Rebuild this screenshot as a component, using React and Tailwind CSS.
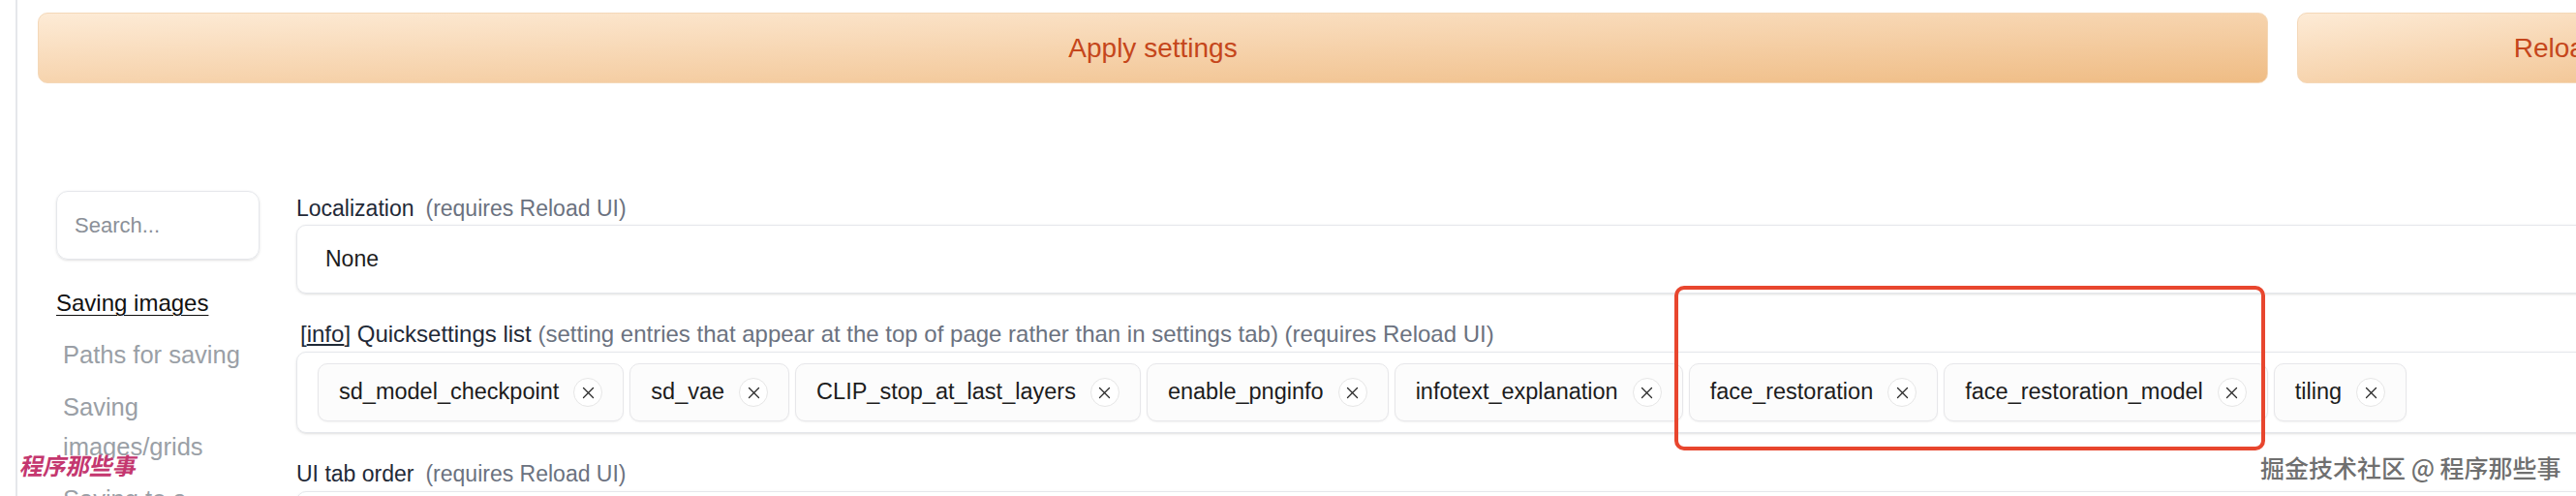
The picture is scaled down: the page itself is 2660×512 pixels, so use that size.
const tags = [
  "sd_model_checkpoint",
  "sd_vae",
  "CLIP_stop_at_last_layers",
  "enable_pnginfo",
  "infotext_explanation",
  "face_restoration",
  "face_restoration_model",
  "tiling",
];

const navItems = ["Paths for saving", "Saving images/grids", "Saving to a directory"];

function CloseIcon() {
  return (
    <svg width="15" height="15" viewBox="0 0 15 15" fill="none">
      <path d="M2.5 2.5L12.5 12.5M12.5 2.5L2.5 12.5" stroke="#2a2a2a" strokeWidth="1.3" strokeLinecap="round" />
    </svg>
  );
}

function Tag({ label }) {
  return (
    <div className="flex h-[60px] shrink-0 items-center rounded-[10px] border border-[#e7e7ea] bg-[#fcfcfc] pl-[21px] pr-[21px] shadow-[0_1px_2px_rgba(0,0,0,0.05)]">
      <span className="text-[23.5px] text-[#1c1c1c]">{label}</span>
      <span className="ml-[15px] flex size-[30px] items-center justify-center rounded-full border border-[#e6e6e6] bg-white">
        <CloseIcon />
      </span>
    </div>
  );
}

function FieldLabel({ children, size = "text-[23px]" }) {
  return <div className={`${size} leading-[28px] text-[#1f2937]`}>{children}</div>;
}

export default function App() {
  return (
    <div className="relative h-[512px] w-[2660px] overflow-hidden bg-white font-['Liberation_Sans','Noto_Sans_CJK_SC',sans-serif]">
      <div className="ml-[16px] h-full border-l-2 border-[#e5e7eb] pl-[21px] pt-[13px]">
        <div className="flex gap-[30px]">
          <button className="flex h-[73px] w-[2303px] shrink-0 items-center justify-center rounded-[10px] border border-[#f4d8b8] bg-linear-to-br from-[#fdebd6] to-[#efbc84] text-[28px] text-[#c5461b]">
            Apply settings
          </button>
          <button className="flex h-[73px] w-[572px] shrink-0 items-center justify-center rounded-[10px] border border-[#f4d8b8] bg-linear-to-br from-[#fdebd6] to-[#efbc84] text-[28px] text-[#c5461b]">
            Reload UI
          </button>
        </div>

        <div className="mt-[111px] flex">
          <aside className="ml-[19px] w-[210px] shrink-0">
            <div className="flex h-[71px] items-center rounded-[12px] border border-[#e5e7eb] pl-[18px] text-[22px] text-[#8b9098] shadow-sm">
              Search...
            </div>
            <div className="mt-[24px] text-[24px] leading-[41px] text-[#111111] underline decoration-1 underline-offset-4">
              Saving images
            </div>
            {navItems.map((item) => (
              <div key={item} className="mt-[13px] pl-[7px] text-[25.5px] leading-[41px] text-[#9a9fa6]">
                {item}
              </div>
            ))}
          </aside>

          <main className="ml-[38px] w-[2420px] shrink-0 pt-[4px]">
            <FieldLabel>
              Localization<span className="ml-[12px] text-[#6b7280]">(requires Reload UI)</span>
            </FieldLabel>
            <div className="mt-[3px] flex h-[71px] items-center rounded-[10px] border border-[#e5e7eb] pl-[29px] text-[23px] text-[#1c1c1c] shadow-sm">
              None
            </div>

            <div className="mt-[28px] pl-[4px]">
              <FieldLabel size="text-[24px]">
                [<span className="underline underline-offset-2">info</span>] Quicksettings list{" "}
                <span className="text-[#6b7280]">
                  (setting entries that appear at the top of page rather than in settings tab) (requires Reload UI)
                </span>
              </FieldLabel>
            </div>
            <div className="mt-[4px] flex h-[84px] items-center gap-[6px] rounded-[10px] border border-[#e5e7eb] px-[21px] shadow-sm">
              {tags.map((t) => (
                <Tag key={t} label={t} />
              ))}
            </div>

            <div className="mt-[28px]">
              <FieldLabel>
                UI tab order<span className="ml-[12px] text-[#6b7280]">(requires Reload UI)</span>
              </FieldLabel>
            </div>
            <div className="mt-[4px] h-[71px] rounded-[10px] border border-[#e5e7eb] shadow-sm" />
          </main>
        </div>
      </div>

      <div className="absolute left-[1729px] top-[295px] h-[170px] w-[610px] rounded-[10px] border-[4px] border-[#e8462e]" />

      <div className="absolute left-[22px] top-[464px] -skew-x-12 font-['Noto_Sans_CJK_SC',sans-serif] text-[24px] font-bold leading-[32px] text-[#c4376f]">
        程序那些事
      </div>

      <div className="absolute left-[2334px] top-[466px] font-['Noto_Sans_CJK_SC',sans-serif] text-[25px] font-medium leading-[32px] text-[#6f6f6f] [text-shadow:0_0_2px_#ffffff,0_0_1px_#ffffff]">
        掘金技术社区 @ 程序那些事
      </div>
    </div>
  );
}
